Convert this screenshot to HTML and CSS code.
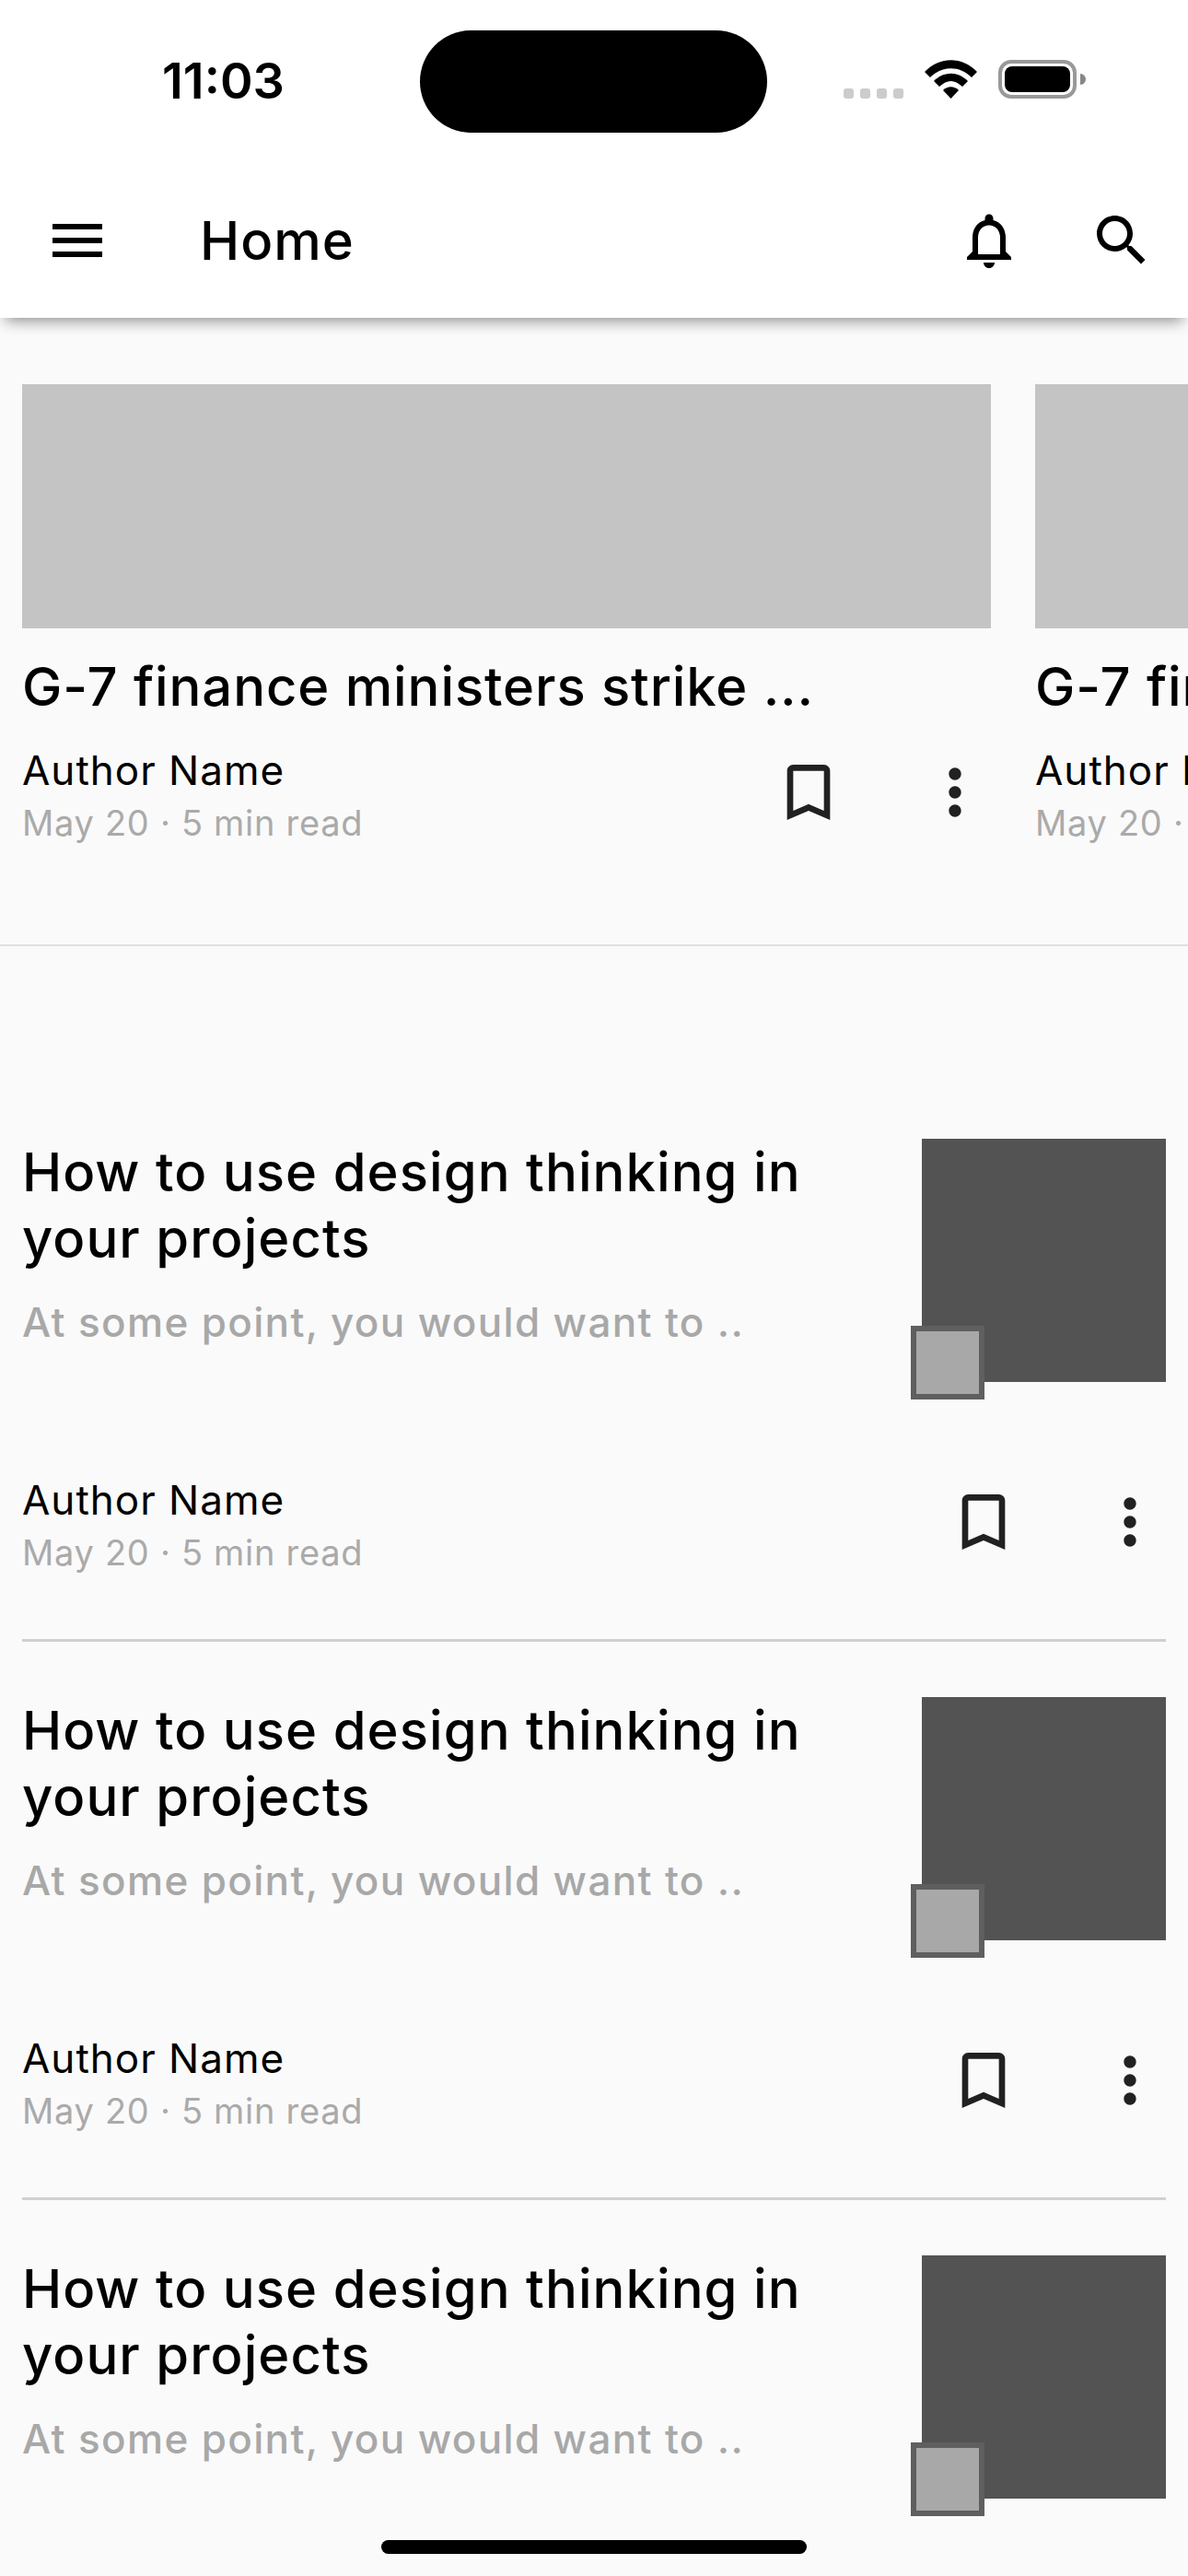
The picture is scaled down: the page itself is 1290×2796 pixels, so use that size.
FILE: index.html
```html
<!DOCTYPE html>
<html lang="en">
<head>
    <meta charset="UTF-8">
    <meta name="viewport" content="width=device-width, initial-scale=1.0">
    <title>Home</title>
    <link rel="stylesheet" href="styles.css">
</head>
<body>
    <header class="app-header">
        <div class="status-bar">
            <div class="status-left"><span class="time">11:03</span></div>
            <div class="island"></div>
            <div class="status-right">
                <div class="signal"><i></i><i></i><i></i><i></i></div>
                <svg class="wifi" viewBox="0 0 57 42" fill="#000"><path d="M0 13C16-4 41-4 57 13L51 19C38 6 19 6 6 19Z"/><path d="M10 23C21 12 36 12 47 23L41 29C32 21 25 21 16 29Z"/><path d="M20 33C25 28 32 28 37 33L28.5 42Z"/></svg>
                <div class="battery"><div class="battery-level"></div></div>
            </div>
        </div>
        <nav class="nav-bar">
            <svg class="nav-icon" viewBox="0 0 24 24"><path d="M3 18h18v-2H3v2zm0-5h18v-2H3v2zm0-7v2h18V6H3z"/></svg>
            <h1 class="nav-title">Home</h1>
            <svg class="nav-icon bell" viewBox="0 0 24 24"><path d="M12 22c1.1 0 2-.9 2-2h-4c0 1.1.9 2 2 2zm6-6v-5c0-3.07-1.63-5.64-4.5-6.32V4c0-.83-.67-1.5-1.5-1.5s-1.5.67-1.5 1.5v.68C7.64 5.36 6 7.92 6 11v5l-2 2v1h16v-1l-2-2zm-2 1H8v-6c0-2.48 1.51-4.5 4-4.5s4 2.02 4 4.5v6z"/></svg>
            <svg class="nav-icon search" viewBox="0 0 24 24"><path d="M15.5 14h-.79l-.28-.27C15.41 12.59 16 11.11 16 9.5 16 5.91 13.09 3 9.5 3S3 5.91 3 9.5 5.91 16 9.5 16c1.61 0 3.09-.59 4.23-1.57l.27.28v.79l5 4.99L20.49 19l-4.99-5zm-6 0C7.01 14 5 11.99 5 9.5S7.01 5 9.5 5 14 7.01 14 9.5 11.99 14 9.5 14z"/></svg>
        </nav>
    </header>

    <section class="carousel">
        <article class="card">
            <div class="card-image"></div>
            <h2 class="card-title">G-7 finance ministers strike ...</h2>
            <div class="meta">
                <div class="meta-text">
                    <p class="author">Author Name</p>
                    <p class="date">May 20 · 5 min read</p>
                </div>
                <svg class="action" viewBox="0 0 24 24"><path d="M17 3H7c-1.1 0-1.99.9-1.99 2L5 21l7-3 7 3V5c0-1.1-.9-2-2-2zm0 15l-5-2.18L7 18V5h10v13z"/></svg>
                <svg class="action" viewBox="0 0 24 24"><path d="M12 8c1.1 0 2-.9 2-2s-.9-2-2-2-2 .9-2 2 .9 2 2 2zm0 2c-1.1 0-2 .9-2 2s.9 2 2 2 2-.9 2-2-.9-2-2-2zm0 6c-1.1 0-2 .9-2 2s.9 2 2 2 2-.9 2-2-.9-2-2-2z"/></svg>
            </div>
        </article>
        <article class="card">
            <div class="card-image"></div>
            <h2 class="card-title">G-7 finance ministers strike ...</h2>
            <div class="meta">
                <div class="meta-text">
                    <p class="author">Author Name</p>
                    <p class="date">May 20 · 5 min read</p>
                </div>
                <svg class="action" viewBox="0 0 24 24"><path d="M17 3H7c-1.1 0-1.99.9-1.99 2L5 21l7-3 7 3V5c0-1.1-.9-2-2-2zm0 15l-5-2.18L7 18V5h10v13z"/></svg>
                <svg class="action" viewBox="0 0 24 24"><path d="M12 8c1.1 0 2-.9 2-2s-.9-2-2-2-2 .9-2 2 .9 2 2 2zm0 2c-1.1 0-2 .9-2 2s.9 2 2 2 2-.9 2-2-.9-2-2-2zm0 6c-1.1 0-2 .9-2 2s.9 2 2 2 2-.9 2-2-.9-2-2-2z"/></svg>
            </div>
        </article>
    </section>

    <section class="list">
        <article class="item">
            <div class="item-top">
                <div class="item-text">
                    <h2 class="item-title">How to use design thinking in your projects</h2>
                    <p class="item-sub">At some point, you would want to ..</p>
                </div>
                <div class="thumb"><div class="thumb-small"></div></div>
            </div>
            <div class="meta item-meta">
                <div class="meta-text">
                    <p class="author">Author Name</p>
                    <p class="date">May 20 · 5 min read</p>
                </div>
                <svg class="action" viewBox="0 0 24 24"><path d="M17 3H7c-1.1 0-1.99.9-1.99 2L5 21l7-3 7 3V5c0-1.1-.9-2-2-2zm0 15l-5-2.18L7 18V5h10v13z"/></svg>
                <svg class="action" viewBox="0 0 24 24"><path d="M12 8c1.1 0 2-.9 2-2s-.9-2-2-2-2 .9-2 2 .9 2 2 2zm0 2c-1.1 0-2 .9-2 2s.9 2 2 2 2-.9 2-2-.9-2-2-2zm0 6c-1.1 0-2 .9-2 2s.9 2 2 2 2-.9 2-2-.9-2-2-2z"/></svg>
            </div>
        </article>
        <article class="item">
            <div class="item-top">
                <div class="item-text">
                    <h2 class="item-title">How to use design thinking in your projects</h2>
                    <p class="item-sub">At some point, you would want to ..</p>
                </div>
                <div class="thumb"><div class="thumb-small"></div></div>
            </div>
            <div class="meta item-meta">
                <div class="meta-text">
                    <p class="author">Author Name</p>
                    <p class="date">May 20 · 5 min read</p>
                </div>
                <svg class="action" viewBox="0 0 24 24"><path d="M17 3H7c-1.1 0-1.99.9-1.99 2L5 21l7-3 7 3V5c0-1.1-.9-2-2-2zm0 15l-5-2.18L7 18V5h10v13z"/></svg>
                <svg class="action" viewBox="0 0 24 24"><path d="M12 8c1.1 0 2-.9 2-2s-.9-2-2-2-2 .9-2 2 .9 2 2 2zm0 2c-1.1 0-2 .9-2 2s.9 2 2 2 2-.9 2-2-.9-2-2-2zm0 6c-1.1 0-2 .9-2 2s.9 2 2 2 2-.9 2-2-.9-2-2-2z"/></svg>
            </div>
        </article>
        <article class="item">
            <div class="item-top">
                <div class="item-text">
                    <h2 class="item-title">How to use design thinking in your projects</h2>
                    <p class="item-sub">At some point, you would want to ..</p>
                </div>
                <div class="thumb"><div class="thumb-small"></div></div>
            </div>
        </article>
    </section>

    <div class="home-bar"></div>
</body>
</html>
```

FILE: styles.css
```css
* {
    margin: 0;
    padding: 0;
    box-sizing: border-box;
}

html, body {
    height: 2796px;
    overflow: hidden;
}

body {
    position: relative;
    font-family: Inter, "Liberation Sans", sans-serif;
    background-color: #fafafa;
    color: #000;
}

.app-header {
    position: relative;
    height: 345px;
    background-color: #fff;
    box-shadow: 0 9px 15px -6px rgba(0, 0, 0, 0.45);
}

.status-bar {
    display: flex;
    height: 177px;
}

.status-left {
    width: 456px;
    padding: 56px 0 0 176px;
}

.time {
    font-size: 54px;
    font-weight: 600;
    line-height: 64px;
}

.island {
    width: 377px;
    height: 111px;
    margin-top: 33px;
    background-color: #000;
    border-radius: 56px;
}

.status-right {
    display: flex;
    align-items: flex-end;
    gap: 23px;
    height: 42px;
    margin: 65px 0 0 83px;
}

.signal {
    display: flex;
    gap: 7px;
}

.signal i {
    display: block;
    width: 11px;
    height: 11px;
    background-color: #ccc;
    border-radius: 3px;
}

.wifi {
    width: 57px;
    height: 42px;
}

.battery {
    position: relative;
    width: 85px;
    height: 42px;
    padding: 3px;
    border: 4px solid #999;
    border-radius: 14px;
}

.battery::after {
    content: "";
    position: absolute;
    top: 11px;
    right: -14px;
    width: 6px;
    height: 12px;
    background-color: #888;
    border-radius: 0 6px 6px 0;
}

.battery-level {
    height: 100%;
    background-color: #000;
    border-radius: 8px;
}

.nav-bar {
    display: flex;
    align-items: center;
    height: 168px;
    padding-left: 48px;
}

.nav-icon {
    width: 72px;
    height: 72px;
    flex-shrink: 0;
}

.nav-title {
    flex: 1;
    margin-left: 97px;
    font-size: 58px;
    font-weight: 500;
    line-height: 72px;
    letter-spacing: 1px;
}

.search {
    margin: 0 36px 0 72px;
}

.carousel {
    display: flex;
    gap: 48px;
    height: 682px;
    padding: 72px 0 0 24px;
    border-bottom: 2px solid #e0e0e0;
    overflow: hidden;
}

.card {
    width: 1052px;
    flex-shrink: 0;
}

.card-image {
    height: 265px;
    background-color: #c4c4c4;
}

.card-title {
    margin-top: 27px;
    font-size: 58px;
    font-weight: 500;
    line-height: 72px;
    letter-spacing: 0.9px;
    white-space: nowrap;
}

.meta {
    display: flex;
    align-items: flex-start;
    margin-top: 29px;
}

.meta-text {
    flex: 1;
}

.author {
    font-size: 44px;
    line-height: 52px;
    letter-spacing: 1px;
}

.date {
    margin-top: 5px;
    font-size: 38px;
    line-height: 52px;
    letter-spacing: 0.7px;
    color: #aaa;
}

.action {
    width: 80px;
    height: 80px;
    margin-top: 10px;
    fill: #212121;
}

.action + .action {
    margin-left: 79px;
    margin-right: -1px;
}

.list {
    padding: 0 24px;
}

.item {
    height: 606px;
    padding-top: 60px;
    border-bottom: 3px solid #d0d0d0;
}

.list .item:first-child {
    margin-top: 149px;
}

.item-top {
    display: flex;
    justify-content: space-between;
}

.item-text {
    width: 900px;
}

.item-title {
    font-size: 58px;
    font-weight: 500;
    line-height: 72px;
    letter-spacing: 1.05px;
}

.item-sub {
    margin-top: 27px;
    font-size: 44px;
    font-weight: 500;
    line-height: 56px;
    letter-spacing: 1.35px;
    color: #a8a8a8;
}

.thumb {
    position: relative;
    width: 265px;
    height: 264px;
    background-color: #535353;
}

.thumb-small {
    position: absolute;
    left: -12px;
    bottom: -19px;
    width: 80px;
    height: 80px;
    background-color: #a8a8a8;
    border: 6px solid #5f5f5f;
}

.item-meta {
    margin-top: 102px;
}

.home-bar {
    position: absolute;
    left: 414px;
    bottom: 24px;
    width: 462px;
    height: 15px;
    background-color: #000;
    border-radius: 8px;
}
```
